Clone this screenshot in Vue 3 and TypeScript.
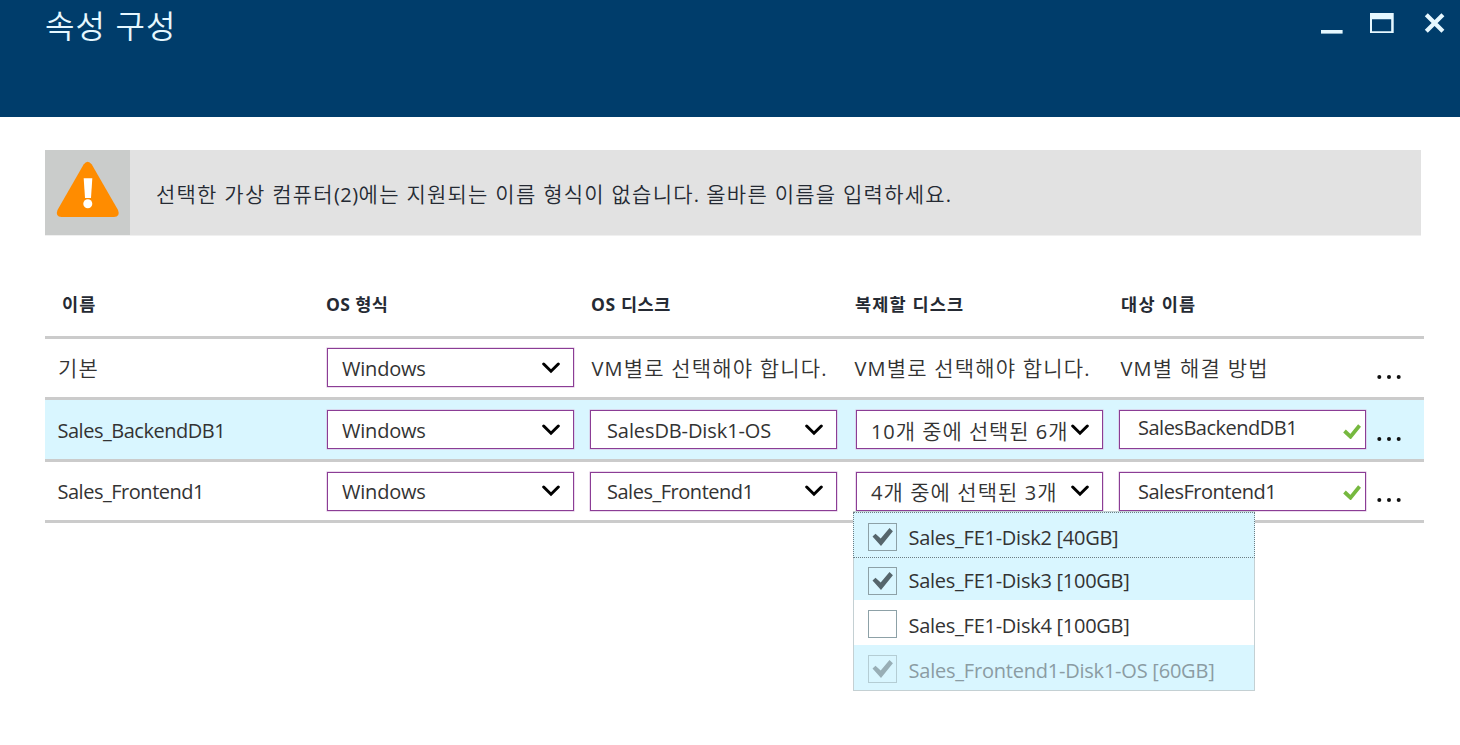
<script setup lang="ts">
interface Cell {
  kind: 'text' | 'select' | 'input'
  text: string
  tracking: number
}
interface Row {
  id: string
  selected?: boolean
  cells: Cell[]
}
interface Disk {
  label: string
  tracking: number
  checked: boolean
  disabled?: boolean
}

const message = '선택한 가상 컴퓨터(2)에는 지원되는 이름 형식이 없습니다. 올바른 이름을 입력하세요.'

const headers = [
  { text: '이름', tracking: 1.2 },
  { text: 'OS 형식', tracking: 0.4 },
  { text: 'OS 디스크', tracking: 0.6 },
  { text: '복제할 디스크', tracking: 1.15 },
  { text: '대상 이름', tracking: 1.3 },
]

const rows: Row[] = [
  {
    id: 'default',
    cells: [
      { kind: 'text', text: '기본', tracking: 1.2 },
      { kind: 'select', text: 'Windows', tracking: -0.2 },
      { kind: 'text', text: 'VM별로 선택해야 합니다.', tracking: 1.15 },
      { kind: 'text', text: 'VM별로 선택해야 합니다.', tracking: 1.15 },
      { kind: 'text', text: 'VM별 해결 방법', tracking: 1.2 },
    ],
  },
  {
    id: 'backend',
    selected: true,
    cells: [
      { kind: 'text', text: 'Sales_BackendDB1', tracking: -0.48 },
      { kind: 'select', text: 'Windows', tracking: -0.2 },
      { kind: 'select', text: 'SalesDB-Disk1-OS', tracking: -0.1 },
      { kind: 'select', text: '10개 중에 선택된 6개', tracking: 0.88 },
      { kind: 'input', text: 'SalesBackendDB1', tracking: -0.5 },
    ],
  },
  {
    id: 'frontend',
    cells: [
      { kind: 'text', text: 'Sales_Frontend1', tracking: -0.48 },
      { kind: 'select', text: 'Windows', tracking: -0.2 },
      { kind: 'select', text: 'Sales_Frontend1', tracking: -0.48 },
      { kind: 'select', text: '4개 중에 선택된 3개', tracking: 1 },
      { kind: 'input', text: 'SalesFrontend1', tracking: -0.48 },
    ],
  },
]

const disks: Disk[] = [
  { label: 'Sales_FE1-Disk2 [40GB]', tracking: -0.26, checked: true },
  { label: 'Sales_FE1-Disk3 [100GB]', tracking: -0.26, checked: true },
  { label: 'Sales_FE1-Disk4 [100GB]', tracking: -0.26, checked: false },
  { label: 'Sales_Frontend1-Disk1-OS [60GB]', tracking: -0.22, checked: true, disabled: true },
]

const korean = (s: string) => /[가-힣]/.test(s)

// Splits a label into Hangul and Latin runs, so each script gets its own weight.
const runs = (s: string) => s.match(/[가-힣 ]+|[^가-힣 ]+/g) ?? []
</script>

<template>
  <div class="blade">
    <header class="titlebar">
      <h1>속성 구성</h1>
      <svg class="window-buttons" width="126" height="24" viewBox="0 0 126 24">
        <rect x="1" y="19" width="21.6" height="3.6" />
        <path fill-rule="evenodd" d="M50 2h23.7v20H50zM52 8.3v11.9h19.2V8.3z" />
        <path class="close" d="M106.300 3.700l16.600 16.600M122.900 3.700l-16.600 16.600" />
      </svg>
    </header>

    <main>
      <section class="banner">
        <div class="banner-icon">
          <svg width="85" height="85" viewBox="0 0 85 85">
            <path
              class="triangle"
              d="M38.6 14.4Q42.7 9 46.8 14.4L73 60Q75.500 66.500 69 67H16.500Q10 66.500 12.500 60Z"
            />
            <path class="mark" d="M38.700 28.300h8.600l-1.300 19.700h-6z" />
            <circle class="mark" cx="42.800" cy="53.800" r="4.500" />
          </svg>
        </div>
        <p><span v-for="(r, k) in runs(message)" :key="k" :class="{ latin: !korean(r) }">{{ r }}</span></p>
      </section>

      <section class="table">
        <div class="grid head">
          <div v-for="h in headers" :key="h.text" :style="{ letterSpacing: h.tracking + 'px' }">{{ h.text }}</div>
        </div>
        <div v-for="row in rows" :key="row.id" class="grid row" :class="[row.id, { selected: row.selected }]">
          <div v-for="(cell, i) in row.cells" :key="i" class="cell">
            <div :class="[cell.kind, { ko: korean(cell.text) }]">
              <span :style="{ letterSpacing: cell.tracking + 'px' }"
                ><span v-for="(r, k) in runs(cell.text)" :key="k" :class="{ latin: !korean(r) }">{{ r }}</span></span
              >
              <svg v-if="cell.kind === 'select'" class="chevron" width="18" height="12" viewBox="0 0 18 12">
                <path d="M1.700 2l7.300 7.200L16.300 2" />
              </svg>
              <svg v-if="cell.kind === 'input'" class="valid" width="18" height="15" viewBox="0 0 18 15">
                <path d="M1.500 7l6 5.700L16.600 1.500" />
              </svg>
            </div>
            <ul v-if="row.id === 'frontend' && i === 3" class="menu">
              <li v-for="d in disks" :key="d.label" :class="{ on: d.checked, disabled: d.disabled }">
                <i class="box">
                  <svg v-if="d.checked" width="27" height="26" viewBox="0 0 27 26">
                    <path d="M3.500 12.500l3-2.700 5.200 4.700 8.800-10.500 3.400 3.300L12 22z" />
                  </svg>
                </i>
                <span :style="{ letterSpacing: d.tracking + 'px' }">{{ d.label }}</span>
              </li>
            </ul>
          </div>
          <svg class="more" width="28" height="6" viewBox="0 0 28 6">
            <circle cx="4.300" cy="3" r="2" />
            <circle cx="14" cy="3" r="2" />
            <circle cx="23.700" cy="3" r="2" />
          </svg>
        </div>
      </section>
    </main>
  </div>
</template>

<style>
body {
  background: #fff;
}
</style>

<style scoped>
.blade {
  height: 745px;
  overflow: hidden;
  background: #fff;
  color: #333;
  font: 400 20px/24px 'Open Sans', 'Noto Sans CJK KR', sans-serif;
  white-space: nowrap;
}
.titlebar {
  display: flex;
  justify-content: space-between;
  height: 117px;
  padding: 0 14px 0 45px;
  box-sizing: border-box;
  background: #003d6b;
}
h1 {
  margin: 4px 0 0;
  color: #e6f8ff;
  font-size: 32px;
  font-weight: 350;
  line-height: 44px;
  letter-spacing: 1.1px;
}
.window-buttons {
  margin-top: 11px;
  fill: #e6f8ff;
}
.close {
  fill: none;
  stroke: #e6f8ff;
  stroke-width: 4.2;
}
main {
  padding: 33px 36px 0 45px;
}
.banner {
  display: flex;
  align-items: center;
  width: 1376px;
  height: 85px;
  background: #e2e2e2;
  border-bottom: 1px solid #f0f0f0;
}
.banner-icon {
  width: 85px;
  height: 85px;
  background: #cacccb;
}
.banner svg {
  display: block;
}
.triangle {
  fill: #ff8c00;
}
.mark {
  fill: #fff;
}
.banner p {
  margin: 4px 0 0 26px;
  color: #252a33;
  font-size: 21px;
  font-weight: 350;
  letter-spacing: 1.24px;
}
.ko .latin,
.banner .latin {
  font-size: 20px;
  font-weight: 400;
}
.banner .latin {
  letter-spacing: 0.5px;
}
.grid {
  display: grid;
  grid-template-columns: 282px 263px 266px 263px 256px auto;
}
.table {
  width: 1379px;
}
.head {
  height: 103px;
  box-sizing: border-box;
  padding-top: 56px;
  border-bottom: 3px solid #cbcbcb;
  color: #252a33;
  font-size: 17.5px;
  font-weight: 700;
}
.head div:nth-child(1) {
  padding-left: 17px;
}
.head div:nth-child(2),
.head div:nth-child(4) {
  margin-left: -1px;
}
.head div:nth-child(3) {
  padding-left: 1px;
}
.head div:nth-child(5) {
  padding-left: 2px;
}
.row {
  border-bottom: 3px solid #cbcbcb;
  height: 59px;
}
.row.default {
  height: 58px;
}
.row.frontend {
  height: 58px;
}
.selected {
  background: #d9f6ff;
}
.cell {
  position: relative;
  padding-top: 10px;
}
.default .cell {
  padding-top: 9px;
}
.text {
  height: 39px;
  box-sizing: border-box;
  padding-top: 9px;
}
.cell:first-child {
  padding-left: 12.5px;
}
.default .cell:first-child {
  padding-left: 13px;
}
.default .text {
  padding-top: 8px;
}
.cell:nth-child(3) .text,
.cell:nth-child(5) .text {
  padding-left: 1.5px;
}
.cell:nth-child(4) .text {
  margin-left: -1.5px;
}
.ko {
  font-size: 21px;
  font-weight: 350;
}
.select,
.input {
  display: flex;
  justify-content: space-between;
  width: 247px;
  height: 39px;
  box-sizing: border-box;
  border: 1px solid #8b3d95;
  box-shadow: 0 0 0 0.5px #d8b8dc;
  padding: 8px 13px 0 14px;
  background: #fff;
}
.cell:nth-child(3) .select {
  padding-left: 16px;
}
.input {
  padding: 5px 4px 0 18px;
}
.frontend .input {
  padding-top: 7px;
}
.frontend .text {
  padding-top: 8px;
}
.frontend .select {
  padding-top: 7px;
}
.chevron {
  flex: none;
  margin-top: 5px;
  fill: none;
  stroke: #000;
  stroke-width: 3;
  stroke-linecap: round;
}
.valid {
  flex: none;
  margin-top: 8px;
  fill: none;
  stroke: #76b83f;
  stroke-width: 3.8;
}
.frontend .valid {
  margin-top: 5px;
}
.more {
  margin: 35px 0 0 0;
  fill: #111;
}
.backend .more {
  margin-top: 36px;
}
.menu {
  position: absolute;
  z-index: 2;
  top: 49px;
  left: -3px;
  width: 402px;
  height: 180px;
  box-sizing: border-box;
  margin: 0;
  padding: 0;
  border: 1px solid #c4d0d3;
  background: #fff;
  list-style: none;
}
.menu li {
  display: flex;
  height: 45px;
  box-sizing: border-box;
  padding: 10px 0 0 14px;
}
.menu li.on {
  background: #d9f6ff;
}
.menu li:nth-child(1) {
  height: 46px;
  margin: 0 -1px;
  padding: 10px 0 0 14px;
  border: 1px dotted #6d7d83;
}
.menu li:nth-child(2) {
  height: 42px;
  padding-top: 9px;
}
.menu li span {
  margin: 4px 0 0 11.5px;
}
.menu li:nth-child(1) span {
  margin-top: 3px;
}
.menu li:nth-child(2) span {
  margin-top: 2px;
}
.box {
  width: 27px;
  height: 26px;
  border: 1px solid #8da1a7;
}
.box svg {
  display: block;
  fill: #56666c;
}
.disabled {
  color: #8b9ca3;
}
.disabled .box {
  border-color: #b4cdd4;
}
.disabled .box svg {
  fill: #98aeb6;
}
</style>
